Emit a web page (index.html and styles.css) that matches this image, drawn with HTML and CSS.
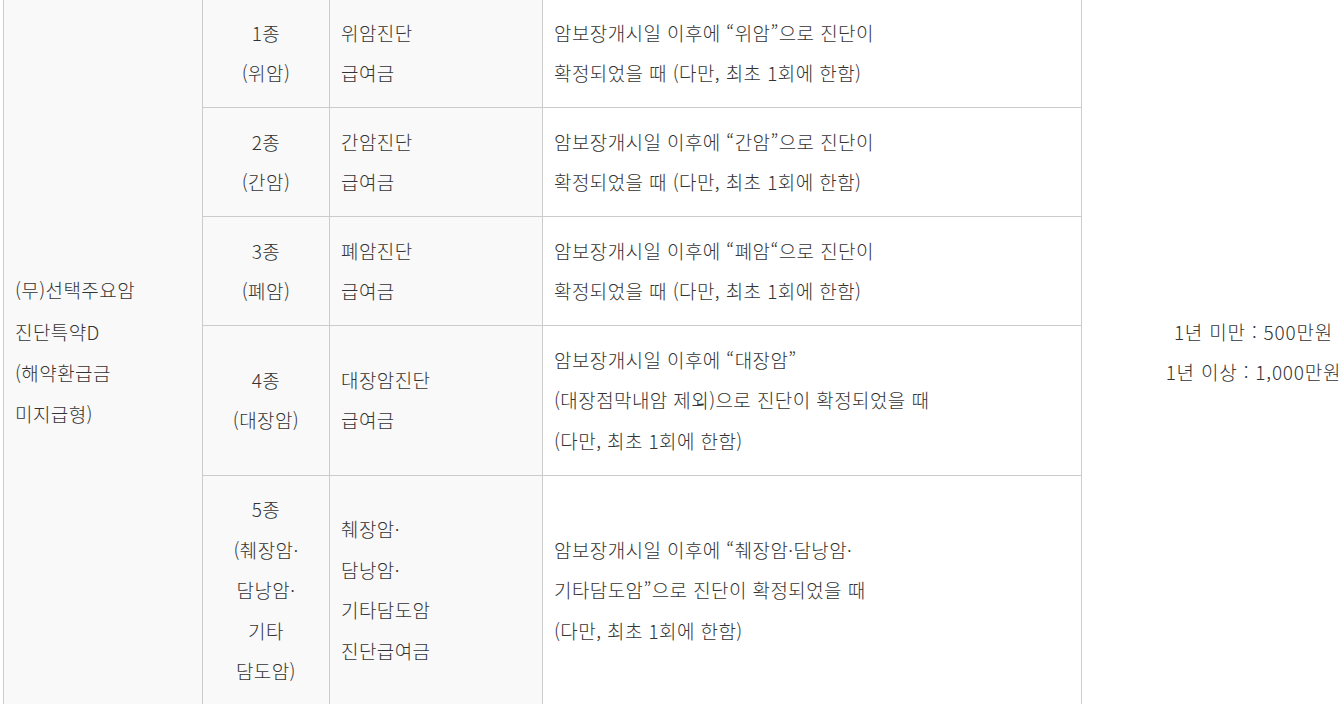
FILE: index.html
```html
<!DOCTYPE html>
<html lang="ko">
<head>
<meta charset="utf-8">
<title>선택주요암 진단특약</title>
<link rel="stylesheet" href="styles.css">
</head>
<body>
<table class="cover">
  <colgroup>
    <col class="c-name">
    <col class="c-kind">
    <col class="c-benefit">
    <col class="c-reason">
    <col class="c-amount">
  </colgroup>
  <tbody>
    <tr>
      <td class="name" rowspan="5">(무)선택주요암<br>진단특약D<br>(해약환급금<br>미지급형)</td>
      <td class="kind">1종<br>(위암)</td>
      <td class="benefit">위암진단<br>급여금</td>
      <td class="reason">암보장개시일 이후에 “위암”으로 진단이<br>확정되었을 때 (다만, 최초 1회에 한함)</td>
      <td class="amount" rowspan="5">1년 미만 : 500만원<br>1년 이상 : 1,000만원</td>
    </tr>
    <tr>
      <td class="kind">2종<br>(간암)</td>
      <td class="benefit">간암진단<br>급여금</td>
      <td class="reason">암보장개시일 이후에 “간암”으로 진단이<br>확정되었을 때 (다만, 최초 1회에 한함)</td>
    </tr>
    <tr>
      <td class="kind">3종<br>(폐암)</td>
      <td class="benefit">폐암진단<br>급여금</td>
      <td class="reason">암보장개시일 이후에 “폐암“으로 진단이<br>확정되었을 때 (다만, 최초 1회에 한함)</td>
    </tr>
    <tr>
      <td class="kind">4종<br>(대장암)</td>
      <td class="benefit">대장암진단<br>급여금</td>
      <td class="reason">암보장개시일 이후에 “대장암”<br>(대장점막내암 제외)으로 진단이 확정되었을 때<br>(다만, 최초 1회에 한함)</td>
    </tr>
    <tr>
      <td class="kind">5종<br>(췌장암·<br>담낭암·<br>기타<br>담도암)</td>
      <td class="benefit">췌장암·<br>담낭암·<br>기타담도암<br>진단급여금</td>
      <td class="reason">암보장개시일 이후에 “췌장암·담낭암·<br>기타담도암”으로 진단이 확정되었을 때<br>(다만, 최초 1회에 한함)</td>
    </tr>
  </tbody>
</table>
</body>
</html>
```

FILE: styles.css
```css
html, body {
  margin: 0;
  padding: 0;
  overflow: hidden;
  background: #ffffff;
}

body {
  font-family: "Noto Sans CJK KR", "Noto Sans", sans-serif;
  font-weight: 300;
  font-size: 19px;
  letter-spacing: 0.4px;
  color: #333333;
}

.cover {
  border-collapse: collapse;
  table-layout: fixed;
  width: 1422px;
  margin: -2px 0 0 3px;
}

.c-name { width: 199px; }
.c-kind { width: 127px; }
.c-benefit { width: 213px; }
.c-reason { width: 539px; }
.c-amount { width: 344px; }

.cover td {
  border: 1px solid #cccccc;
  padding: 13.5px 11px;
  line-height: 40.5px;
  vertical-align: middle;
  white-space: nowrap;
}

.name,
.kind,
.benefit {
  background: #f9f9f9;
}

.name {
  line-height: 41.3px !important;
  padding-left: 11px;
}

.kind {
  text-align: center;
}

.reason {
  background: #ffffff;
}

.amount {
  background: #ffffff;
  text-align: center;
  letter-spacing: 0.8px;
}
```
